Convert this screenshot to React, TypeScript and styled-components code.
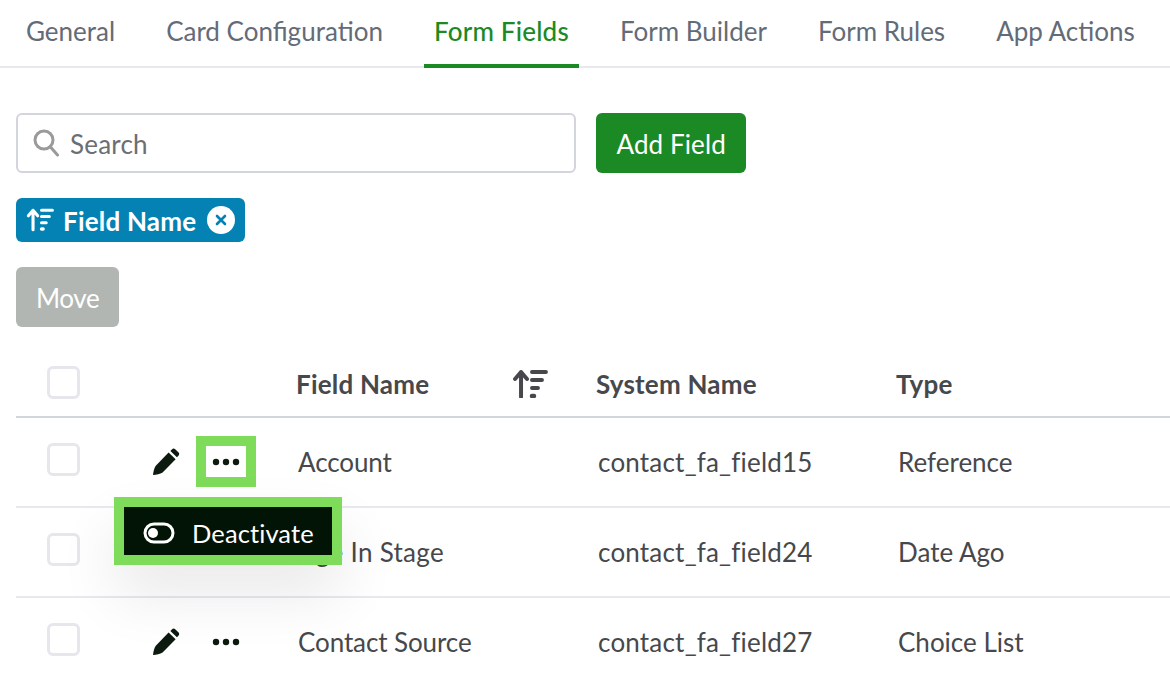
import styled, { createGlobalStyle } from "styled-components";

const GlobalStyle = createGlobalStyle`
  html, body {
    margin: 0;
    padding: 0;
    background: #fff;
    overflow: hidden;
  }
  body {
    font-family: "Lato", "Liberation Sans", sans-serif;
    font-size: 26px;
    letter-spacing: 0.1px;
  }
`;

const Page = styled.div`
  width: 1170px;
  height: 686px;
  overflow: hidden;
`;
const Tabs = styled.div`
  display: flex;
  gap: 31px;
  height: 66px;
  padding-left: 16px;
  border-bottom: 2px solid #e8e9ee;
`;
const Tab = styled.div<{ $active?: boolean }>`
  box-sizing: border-box;
  height: 68px;
  padding: 15px 10px 0;
  border-bottom: 4px solid ${(p) => (p.$active ? "#1c8a24" : "transparent")};
  line-height: 32px;
  font-weight: ${(p) => (p.$active ? 500 : 400)};
  letter-spacing: ${(p) => (p.$active ? "0.2px" : "0")};
  color: ${(p) => (p.$active ? "#1c8a24" : "#646b78")};
  white-space: nowrap;
`;
const Content = styled.div`
  padding: 45px 0 0 16px;
`;
const SearchRow = styled.div`
  display: flex;
  gap: 20px;
`;
const SearchBox = styled.div`
  width: 560px;
  height: 60px;
  box-sizing: border-box;
  border: 2px solid #d2d5dc;
  border-radius: 6px;
  display: flex;
  align-items: center;
  gap: 11px;
  padding: 0 0 0 15px;
  color: #6b6e72;
`;
const SearchText = styled.span`
  padding-top: 2px;
  letter-spacing: 0.2px;
`;
const Button = styled.div<{ $disabled?: boolean }>`
  height: 60px;
  box-sizing: border-box;
  padding: 2px ${(p) => (p.$disabled ? "20px" : "20.5px")} 0;
  border-radius: 6px;
  display: inline-flex;
  align-items: center;
  color: #fff;
  letter-spacing: ${(p) => (p.$disabled ? "-0.4px" : "0.1px")};
  background: ${(p) => (p.$disabled ? "#b2b6b2" : "#1c8a24")};
`;
const Chip = styled.div`
  margin-top: 25px;
  width: 229px;
  height: 44px;
  box-sizing: border-box;
  border-radius: 6px;
  background: #0482b4;
  color: #fff;
  display: flex;
  align-items: center;
  padding-left: 10px;
  font-weight: 700;
  letter-spacing: 0.2px;
`;
const ChipLabel = styled.span`
  margin-left: 9px;
  padding-top: 2px;
`;
const ChipClose = styled.span`
  margin-left: 11px;
  width: 28px;
  height: 28px;
  border-radius: 50%;
  background: #fff;
  display: flex;
  align-items: center;
  justify-content: center;
  margin-top: -1px;
`;
const MoveRow = styled.div`
  margin-top: 25px;
`;
const Table = styled.div`
  position: relative;
`;
const Row = styled.div<{ $head?: boolean }>`
  display: grid;
  grid-template-columns: 31px 33px 218px 300px 300px 1fr;
  align-items: center;
  box-sizing: border-box;
  height: ${(p) => (p.$head ? "91px" : "90px")};
  padding-top: ${(p) => (p.$head ? "20px" : "0")};
  border-bottom: 2px solid ${(p) => (p.$head ? "#d2d5dc" : "#e8e9ee")};
  color: #46484c;
`;
const Check = styled.div<{ $head?: boolean }>`
  grid-column: 2;
  width: 33px;
  height: 33px;
  box-sizing: border-box;
  border: 3px solid #e6e7ec;
  border-radius: 6px;
  margin-top: ${(p) => (p.$head ? "2px" : "-5px")};
`;
const Actions = styled.div`
  display: flex;
  align-items: center;
  padding-left: 72px;
`;
const MoreButton = styled.div<{ $focus?: boolean }>`
  margin: -1px 0 0 26px;
  width: 40px;
  height: 31px;
  display: flex;
  align-items: center;
  justify-content: center;
  outline: ${(p) => (p.$focus ? "10px solid #7fdb5a" : "none")};
`;
const HeadCell = styled.div`
  font-weight: 700;
  display: flex;
  align-items: center;
  justify-content: space-between;
  padding: 4px 50px 0 0;
  margin-left: -2px;
  letter-spacing: 0.2px;
`;
const Cell = styled.div<{ $spacing: string }>`
  white-space: nowrap;
  letter-spacing: ${(p) => p.$spacing};
`;
const Menu = styled.div`
  position: absolute;
  left: 108px;
  top: 180px;
  width: 208px;
  height: 48px;
  box-sizing: border-box;
  background: #021405;
  outline: 10px solid #7fdb5a;
  color: #fff;
  display: flex;
  align-items: center;
  padding: 3px 0 0 19px;
  gap: 17px;
  font-size: 25.5px;
  box-shadow: 0 30px 60px 10px rgba(0, 0, 0, 0.09);
`;

const SortIcon = ({ color, size }: { color: string; size: number }) => (
  <svg width={size} height={size * 0.83} viewBox="0 0 36 30" fill="none" stroke={color} strokeLinecap="round">
    <path d="M9 28V3M3 10l6-7 6 7" strokeWidth="4" strokeLinejoin="round" />
    <path d="M20 3h14M20 11h10M20 19h6" strokeWidth="4" />
    <path d="M20 27h2" strokeWidth="4.5" />
  </svg>
);

const Pencil = () => (
  <svg width="28" height="28" viewBox="0 0 28 28" fill="#0c1a10">
    <path d="M1 27c.4-3.6 1.3-7 2.8-9.2L16.6 4.6l7 6.6L10.6 24.4C8 26 4.6 26.8 1 27z" />
    <path d="M18.4 2.9l1.7-1.7c.9-.8 2.2-.8 3.1 0l3.4 3.3c.8.9.8 2.2 0 3l-1.7 1.8z" />
  </svg>
);

const Dots = () => (
  <svg width="28" height="8" viewBox="0 0 28 8" fill="#0c1a10">
    <circle cx="4" cy="4" r="3.2" />
    <circle cx="14" cy="4" r="3.2" />
    <circle cx="24" cy="4" r="3.2" />
  </svg>
);

const fields = [
  { name: "Account", spacing: "-0.1px", system: "contact_fa_field15", type: "Reference", focus: true },
  { name: "Age In Stage", spacing: "0.3px", system: "contact_fa_field24", type: "Date Ago", focus: false },
  { name: "Contact Source", spacing: "-0.1px", system: "contact_fa_field27", type: "Choice List", focus: false },
];

function App() {
  return (
    <Page>
      <GlobalStyle />
      <Tabs>
        <Tab>General</Tab>
        <Tab>Card Configuration</Tab>
        <Tab $active>Form Fields</Tab>
        <Tab>Form Builder</Tab>
        <Tab>Form Rules</Tab>
        <Tab>App Actions</Tab>
      </Tabs>
      <Content>
        <SearchRow>
          <SearchBox>
            <svg width="26" height="28" viewBox="0 0 26 28" fill="none" stroke="#9a9a9a" strokeWidth="3">
              <circle cx="11" cy="11" r="9" />
              <path d="M17.5 18l7 8" strokeLinecap="round" />
            </svg>
            <SearchText>Search</SearchText>
          </SearchBox>
          <Button>Add Field</Button>
        </SearchRow>
        <Chip>
          <SortIcon color="#fff" size={28} />
          <ChipLabel>Field Name</ChipLabel>
          <ChipClose>
            <svg width="12" height="12" viewBox="0 0 12 12" stroke="#0482b4" strokeWidth="2.6" strokeLinecap="round">
              <path d="M2 2l8 8M10 2l-8 8" />
            </svg>
          </ChipClose>
        </Chip>
        <MoveRow>
          <Button $disabled>Move</Button>
        </MoveRow>
        <Table>
          <Row $head>
            <Check $head />
            <HeadCell>
              <span />
            </HeadCell>
            <HeadCell>
              Field Name
              <SortIcon color="#46484c" size={36} />
            </HeadCell>
            <HeadCell>System Name</HeadCell>
            <HeadCell>Type</HeadCell>
          </Row>
          {fields.map((field) => (
            <Row key={field.system}>
              <Check />
              <Actions>
                <Pencil />
                <MoreButton $focus={field.focus}>
                  <Dots />
                </MoreButton>
              </Actions>
              <Cell $spacing={field.spacing}>{field.name}</Cell>
              <Cell $spacing="0.2px">{field.system}</Cell>
              <Cell $spacing="0">{field.type}</Cell>
            </Row>
          ))}
          <Menu>
            <svg width="32" height="22" viewBox="0 0 32 22" fill="none">
              <rect x="2" y="2" width="28" height="18" rx="9" stroke="#fff" strokeWidth="3" />
              <circle cx="10" cy="11" r="5" fill="#fff" />
            </svg>
            Deactivate
          </Menu>
        </Table>
      </Content>
    </Page>
  );
}

export default App;
